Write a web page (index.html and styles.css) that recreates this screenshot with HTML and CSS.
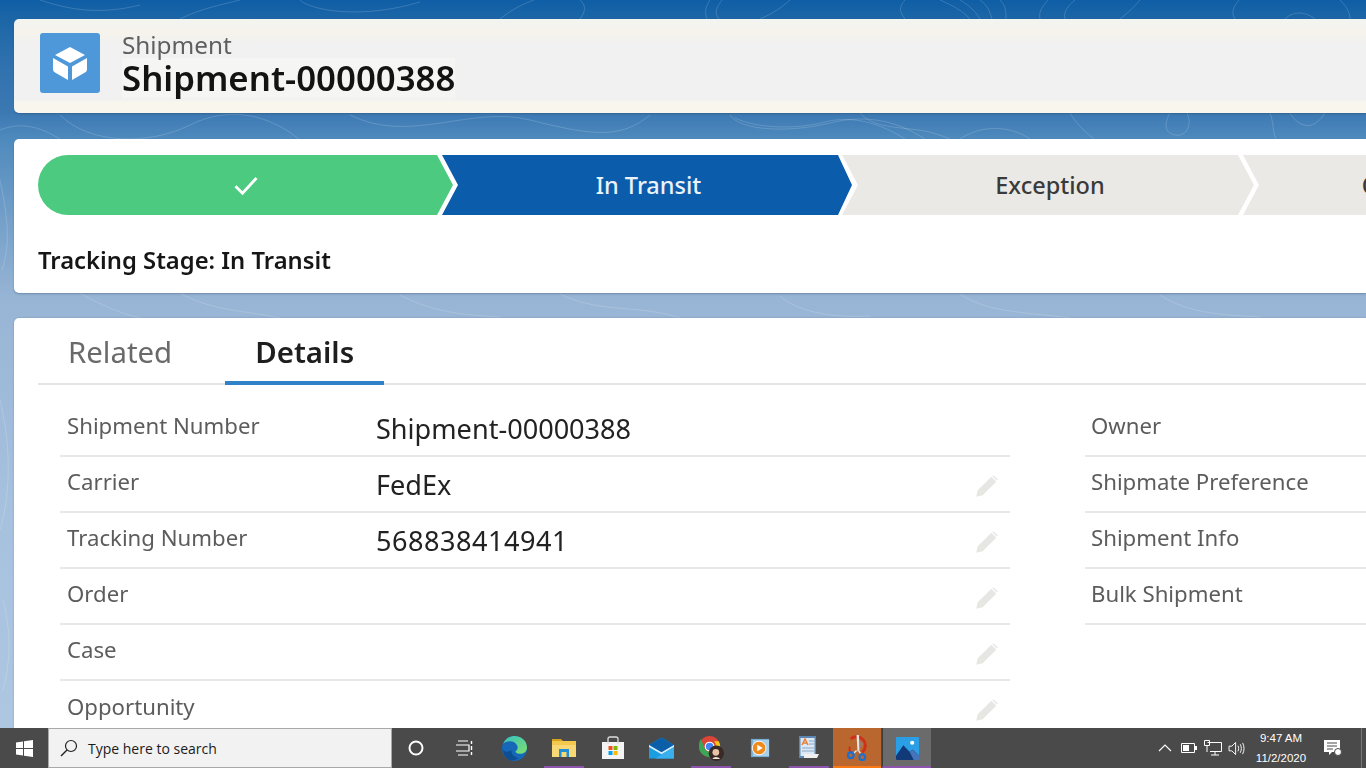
FILE: index.html
```html
<!DOCTYPE html>
<html lang="en">
<head>
<meta charset="utf-8">
<title>Shipment-00000388</title>
<link rel="stylesheet" href="styles.css">
</head>
<body>
<div class="screen">
  <main class="app">
    <svg class="contours" viewBox="0 0 1366 728" preserveAspectRatio="none" aria-hidden="true">
      <g fill="none" stroke="#ffffff" stroke-opacity=".16" stroke-width="1">
        <path d="M730 115c10 16 60 18 100 8s70 0 95 16"/>
        <path d="M735 118c20 10 60 12 90 4s60 4 80 17"/>
        <path d="M860 113c10 12 30 14 50 16s30 6 40 10"/>
        <path d="M1170 113c-6 10-6 20 5 22s18-10 12-22"/>
        <path d="M1270 113c4 10 2 18 6 26M1290 113c8 14 24 20 36-2M1070 113c6 10 14 18 24 26"/>
        <path d="M60 115c30 30 90 30 130 10s80-10 110 15"/>
        <path d="M350 115c60 30 120-10 180 5s90 20 120-5"/>
        <path d="M0 130c25-10 45 0 60 9M960 139c20-14 50-14 70 0"/>
        <path d="M710 0c-4 6-6 12-3 19M722 0c-6 8-8 13-3 19M760 19c14-6 22-12 30-19M905 19c-6-8-6-12 0-19"/>
        <path d="M940 0c14 6 24 12 30 19M960 0c10 6 16 12 20 19M980 0c8 6 10 12 12 19M1000 0c6 6 6 12 6 19M1040 19c-2-8 4-14 8-19M1065 19c-2-8 4-14 10-19"/>
        <path d="M1120 19c10-8 14-12 20-19M1235 19c-4-6-2-12 4-19M1285 19c8-8 20-8 30 0M1340 0c6 6 10 12 10 19"/>
        <path d="M40 0c30 10 60 15 100 5M300 0c10 10 60 20 120 2M180 19c20-10 40-14 60-19M500 19c10-8 20-14 34-19M580 19c6-8 6-14 0-19"/>
        <path d="M80 293c20 12 40 20 60 25M180 293c30 18 70 18 100 25"/>
        <path d="M400 295c30 16 60 20 100 22M560 294c40 20 80 10 120 24"/>
        <path d="M780 296c20 18 60 22 90 20M960 294c30 20 70 18 110 24"/>
        <path d="M1160 295c30 20 70 20 100 22"/>
        <path d="M0 180c6 30 12 60 2 90M0 400c10 40 12 90 0 130M3 600c8 30 8 60 0 90"/>
      </g>
    </svg>

    <header class="card head">
      <div class="tile">
        <svg viewBox="0 0 60 60" width="60" height="60" aria-hidden="true">
          <path d="M30 14l15 8-15 8-15-8z" fill="#fff"/>
          <path d="M13 25l15 8.500V47l-13-7.500q-2-1-2-3z" fill="#fff"/>
          <path d="M47 25l-15 8.500V47l13-7.500q2-1 2-3z" fill="#fff"/>
        </svg>
      </div>
      <div class="head-text">
        <div class="eyebrow">Shipment</div>
        <h1 class="title">Shipment-00000388</h1>
      </div>
    </header>

    <section class="card stages">
      <div class="path">
        <div class="step done">
          <svg viewBox="0 0 24 24" width="28" height="28" aria-hidden="true"><path d="M3 13l6 6L21 6" fill="none" stroke="#fff" stroke-width="2.400"/></svg>
        </div>
        <div class="step current">In Transit</div>
        <div class="step todo">Exception</div>
        <div class="step todo">Out for Delivery</div>
      </div>
      <div class="stage-label">Tracking Stage: In Transit</div>
    </section>

    <section class="card details">
      <nav class="tabs">
        <div class="tab">Related</div>
        <div class="tab active">Details</div>
      </nav>
      <div class="columns">
        <div class="col col-left">
          <div class="row"><span class="label">Shipment Number</span><span class="value">Shipment-00000388</span></div>
          <div class="row"><span class="label">Carrier</span><span class="value">FedEx</span>
            <svg class="pencil" viewBox="0 0 24 24" aria-hidden="true"><path d="M2 22l1.500-6L16 3.500l4.500 4.500L8 20.500z M18 2l4 4-1 1-4-4z"/></svg></div>
          <div class="row"><span class="label">Tracking Number</span><span class="value digits">568838414941</span>
            <svg class="pencil" viewBox="0 0 24 24" aria-hidden="true"><path d="M2 22l1.500-6L16 3.500l4.500 4.500L8 20.500z M18 2l4 4-1 1-4-4z"/></svg></div>
          <div class="row"><span class="label">Order</span><span class="value"></span>
            <svg class="pencil" viewBox="0 0 24 24" aria-hidden="true"><path d="M2 22l1.500-6L16 3.500l4.500 4.500L8 20.500z M18 2l4 4-1 1-4-4z"/></svg></div>
          <div class="row"><span class="label">Case</span><span class="value"></span>
            <svg class="pencil" viewBox="0 0 24 24" aria-hidden="true"><path d="M2 22l1.500-6L16 3.500l4.500 4.500L8 20.500z M18 2l4 4-1 1-4-4z"/></svg></div>
          <div class="row"><span class="label">Opportunity</span><span class="value"></span>
            <svg class="pencil" viewBox="0 0 24 24" aria-hidden="true"><path d="M2 22l1.500-6L16 3.500l4.500 4.500L8 20.500z M18 2l4 4-1 1-4-4z"/></svg></div>
        </div>
        <div class="col col-right">
          <div class="row"><span class="label">Owner</span></div>
          <div class="row"><span class="label">Shipmate Preference</span></div>
          <div class="row"><span class="label">Shipment Info</span></div>
          <div class="row"><span class="label">Bulk Shipment</span></div>
        </div>
      </div>
    </section>
  </main>

  <footer class="taskbar">
    <div class="start">
      <svg viewBox="0 0 17 17" width="17" height="17" aria-hidden="true"><path fill="#fff" d="M0 2.400l7-1V8H0zM8 1.300L17 0v8H8zM0 9h7v6.600l-7-1zM8 9h9v8l-9-1.300z"/></svg>
    </div>
    <div class="search">
      <svg viewBox="0 0 18 18" width="18" height="18" aria-hidden="true"><circle cx="11" cy="7" r="5.500" fill="none" stroke="#222" stroke-width="1.200"/><path d="M7 11l-6 6" stroke="#222" stroke-width="1.400"/></svg>
      <span class="search-text">Type here to search</span>
    </div>
    <div class="slot cortana">
      <svg viewBox="0 0 16 16" width="16" height="16" aria-hidden="true"><circle cx="8" cy="8" r="6.500" fill="none" stroke="#fff" stroke-width="2"/></svg>
    </div>
    <div class="slot taskview">
      <svg viewBox="0 0 18 16" width="18" height="16" aria-hidden="true"><path d="M3 1h10M3 15h10M1 5h13v6H1" fill="none" stroke="#fff" stroke-width="1.200"/><path d="M16.500 1v3M16.500 6v4M16.500 12v3" stroke="#fff" stroke-width="1.400"/></svg>
    </div>
    <div class="slot">
      <svg viewBox="0 0 24 24" width="25" height="25" aria-hidden="true">
        <defs><linearGradient id="edgeA" x1="0" y1="0" x2="1" y2="1"><stop offset="0" stop-color="#35c1c4"/><stop offset="1" stop-color="#7fe06a"/></linearGradient></defs>
        <circle cx="12" cy="12" r="12" fill="#1667b7"/>
        <path d="M1 8C3 2 8 0 12 0c7 0 12 5 12 11 0 4-3 6-6 6-3 0-5-1-5-2 0-1 2-1 2-4 0-3-3-6-7-6-3 0-6 1-7 3z" fill="url(#edgeA)"/>
        <path d="M9 14c0 4 3 7 7 7-3 2-6 3-9 2-4-2-6-6-6-10 2 3 5 2 8 1z" fill="#0c4e94"/>
      </svg>
    </div>
    <div class="slot pinned">
      <svg viewBox="0 0 24 20" width="24" height="20" aria-hidden="true"><path d="M0 1h9l2 2H0z" fill="#d9a21b"/><path d="M0 3h24v16H0z" fill="#f8d775"/><path d="M0 3h24v4H0z" fill="#f2c94c"/><path d="M7 11h10v8H7z" fill="#1f8fd6"/><path d="M9.500 14h5v5h-5z" fill="#f8d775"/></svg>
    </div>
    <div class="slot">
      <svg viewBox="0 0 24 24" width="24" height="26" aria-hidden="true"><path d="M1 6h22v17H1z" fill="#f4f4f4"/><path d="M7 8V3q0-2 2-2h6q2 0 2 2v5" fill="none" stroke="#ddd" stroke-width="1.300"/><path d="M7.500 10h4v4h-4z" fill="#f25022"/><path d="M12.500 10h4v4h-4z" fill="#7fba00"/><path d="M7.500 15h4v4h-4z" fill="#00a4ef"/><path d="M12.500 15h4v4h-4z" fill="#ffb900"/></svg>
    </div>
    <div class="slot">
      <svg viewBox="0 0 24 20" width="25" height="22" aria-hidden="true"><path d="M0 7L12 0l12 7v13H0z" fill="#1b9de2"/><path d="M0 7l12 8 12-8-12-7z" fill="#0a5fa8"/><path d="M0 7l12 7 12-7v2L12 16 0 9z" fill="#d8eefb"/><path d="M24 9v11H6z" fill="#39b0ee"/></svg>
    </div>
    <div class="slot pinned">
      <svg class="chrome" viewBox="0 0 26 26" width="25" height="25" aria-hidden="true"><circle cx="11" cy="11" r="11" fill="#db4437"/><path d="M20.500 5.500A11 11 0 0 1 11 22l4.500-8a5.500 5.500 0 0 0 0-8.500z" fill="#f5c518"/><path d="M0 11A11 11 0 0 0 11 22l4-7.500a5.500 5.500 0 0 1-9-1.500L2 3a11 11 0 0 0-2 8z" fill="#3aa757"/><circle cx="11" cy="11" r="4.500" fill="#4285f4" stroke="#fff" stroke-width="1.200"/><circle cx="18" cy="18" r="8" fill="#3a2a25"/><circle cx="17.500" cy="17" r="3.500" fill="#e9c2a8"/><path d="M14 24c1-3 6-3 8 0z" fill="#efe5dc"/></svg>
    </div>
    <div class="slot">
      <svg viewBox="0 0 22 22" width="20" height="20" aria-hidden="true"><path d="M1 1h20v20H1z" fill="#6fa8d2"/><path d="M3 2h18v18H3z" fill="#a8cfe8"/><circle cx="10" cy="11" r="7.500" fill="#f08a1d" stroke="#fff" stroke-width="1"/><path d="M8 7.500l6 3.500-6 3.500z" fill="#fff"/></svg>
    </div>
    <div class="slot pinned">
      <svg viewBox="0 0 20 24" width="20" height="24" aria-hidden="true"><path d="M0 0h17v22H0z" fill="#5b87b5"/><path d="M1.500 2h14v18h-14z" fill="#dce9f5"/><path d="M3 9l3-6 3 6M4.200 7h3.600" fill="none" stroke="#e8833a" stroke-width="1.600"/><path d="M10 5h5M10 8h5M3 12h12M3 15h12" stroke="#8aa7c4" stroke-width="1"/><path d="M5 18h15l-2 4H5z" fill="#f0f0f0"/></svg>
    </div>
    <div class="slot active-orange">
      <svg viewBox="0 0 24 28" width="23" height="27" aria-hidden="true"><path d="M5 4a8.500 8.500 0 0 1 12 14" fill="none" stroke="#d0301a" stroke-width="3"/><path d="M4 12c-1 3 0 5 2 6" fill="none" stroke="#d0301a" stroke-width="2"/><path d="M11 0h2.500l.5 15-2 2z" fill="#e6e6e6"/><path d="M14.500 6l4 3-4 5z" fill="#a0796a"/><path d="M11 16l-3 3M13 16l2 3" stroke="#dfe4ea" stroke-width="1.500"/><circle cx="5" cy="21" r="3" fill="none" stroke="#1a6fd0" stroke-width="2.200"/><circle cx="17" cy="23" r="3" fill="none" stroke="#1a6fd0" stroke-width="2.200"/></svg>
    </div>
    <div class="slot active-gray">
      <svg viewBox="0 0 22 22" width="23" height="23" aria-hidden="true"><path d="M0 1q0-1 1-1h20q1 0 1 1v20q0 1-1 1H1q-1 0-1-1z" fill="#2b9fe6"/><circle cx="15.500" cy="5.500" r="2" fill="#fff"/><path d="M0 18l7-10 6 6 3-2 6 6v3q0 1-1 1H1q-1 0-1-1z" fill="#123a78"/><path d="M13 14l3-2 6 6v4h-5z" fill="#4773b8"/></svg>
    </div>
    <div class="tray">
      <svg viewBox="0 0 14 8" width="14" height="8" aria-hidden="true"><path d="M1 7l6-6 6 6" fill="none" stroke="#fff" stroke-width="1.100"/></svg>
      <svg viewBox="0 0 16 10" width="16" height="10" aria-hidden="true"><path d="M.5.500h13v9H.5z" fill="none" stroke="#fff"/><path d="M2 2h6v6H2z" fill="#fff"/><path d="M14 3h2v4h-2z" fill="#fff"/></svg>
      <svg viewBox="0 0 18 16" width="18" height="16" aria-hidden="true"><path d="M3.500 2.500h14v9H6M11 11.500V15M7 15h8" fill="none" stroke="#fff"/><path d="M.5.500h5v5h-5zM3 5.500V12" fill="none" stroke="#fff"/></svg>
      <svg viewBox="0 0 18 16" width="17" height="15" aria-hidden="true"><path d="M.5 5.500h3l4-4v13l-4-4h-3z" fill="none" stroke="#fff"/><path d="M10 5c1 2 1 4 0 6M12.500 3.500c1.500 3 1.500 6 0 9M15 2c2 4 2 8 0 12" fill="none" stroke="#fff"/></svg>
      <div class="clock"><div>9:47 AM</div><div>11/2/2020</div></div>
      <svg class="notify" viewBox="0 0 18 16" width="18" height="16" aria-hidden="true"><path d="M0 0h16v12H8l-3 3v-3H0z" fill="#fff"/><path d="M3 3h10M3 6h10M3 9h6" stroke="#4a4a4a"/><circle cx="14" cy="12" r="3.500" fill="#fff" stroke="#4a4a4a"/></svg>
      <div class="show-desktop"></div>
    </div>
  </footer>
</div>
</body>
</html>
```
FILE: styles.css
```css
* { box-sizing: border-box; }
html, body { margin: 0; height: 100%; overflow: hidden; }
body { font-family: "Noto Sans", "Open Sans", sans-serif; color: #1c1c1c; }

.screen { width: 1366px; height: 768px; display: flex; flex-direction: column; overflow: hidden; }

.app {
  position: relative;
  flex: 1;
  min-height: 0;
  overflow: hidden;
  padding: 19px 0 0 14px;
  display: flex;
  flex-direction: column;
  background: linear-gradient(180deg, #0f5ea6 0, #1c66a6 19px, #2e70ae 60px, #3c79b3 113px, #4f8abd 139px, #98b5d5 300px, #a6c1de 500px, #adc7e2 728px);
}
.contours { position: absolute; inset: 0; width: 100%; height: 100%; }

.card {
  position: relative;
  flex: none;
  background: #fff;
  border-radius: 5px 0 0 5px;
  box-shadow: 0 1px 2px rgba(40, 60, 90, .35);
  filter: blur(.45px);
}

.head {
  height: 94px;
  margin-bottom: 26px;
  display: flex;
  align-items: flex-start;
  gap: 22px;
  background: linear-gradient(180deg, #f3f4f0 0, #f6f3ec 14px, #f1f1f1 24px, #f1f1f1 80px, #f9f6ee 83px, #f9f6ee 94px);
  padding: 14px 0 0 26px;
}
.tile {
  width: 60px;
  height: 60px;
  border-radius: 3px;
  background: #4e97d9;
}
.tile svg { display: block; }
.eyebrow { font-size: 24.3px; line-height: 26px; color: #5f5f5f; margin-top: -1px; }
.title { margin: 0; font-size: 34.8px; line-height: 40px; font-weight: 600; color: #131313; background: #f5f5f3; }

.stages { height: 154px; margin-bottom: 25px; padding: 16px 0 0 24px; }
.path { display: flex; height: 60px; width: 1400px; }
.step {
  flex: 0 0 412px;
  margin-right: -11px;
  height: 60px;
  display: flex;
  align-items: center;
  justify-content: center;
  font-size: 23.5px;
  font-weight: 500;
  clip-path: polygon(0 0, 396px 0, 100% 50%, 396px 100%, 0 100%, 16px 50%);
}
.done { flex-basis: 415px; background: #4ccb80; border-radius: 30px 0 0 30px; clip-path: polygon(0 0, 399px 0, 100% 50%, 399px 100%, 0 100%); }
.current { flex-basis: 410px; margin-right: -10px; background: #0b5cab; color: #eaf2fa; padding-left: 3px; }
.todo { background: #ebe9e5; color: #3a3a3a; padding-left: 4px; }
.stage-label { margin-top: 29px; font-size: 23.8px; line-height: 32px; font-weight: 600; color: #161616; }

.details { flex: 1 1 0; min-height: 0; border-radius: 5px 0 0 0; padding: 0 0 0 24px; box-shadow: 0 0 2px rgba(40, 60, 90, .3); }
.tabs { display: flex; height: 67px; border-bottom: 2px solid #e4e4e4; }
.tab { height: 67px; padding: 14px 30px 0; font-size: 29.4px; line-height: 40px; color: #6a6a6a; }
.tab.active { flex: none; width: 159px; font-weight: 600; color: #1e1e1e; border-bottom: 4px solid #2f82c8; text-align: center; padding: 14px 0 0; margin-left: 23px; }

.columns { display: flex; padding: 16px 0 0 22px; }
.col-left { flex: 0 0 950px; }
.col-right { flex: 1; margin-left: 75px; }
.row {
  position: relative;
  display: flex;
  align-items: center;
  height: 56px;
  padding-left: 7px;
  border-bottom: 2px solid #e8e8e8;
}
.row:last-child { border-bottom: 0; }
.col-right .row:last-child { border-bottom: 2px solid #e8e8e8; }
.label { flex: 0 0 309px; font-size: 22.2px; color: #5c5c5c; padding-bottom: 5px; }
.col-right .label { flex: none; }
.col-right .row { padding-left: 6px; }
.value { font-size: 27.1px; color: #222; }
.digits { letter-spacing: .5px; }
.pencil { position: absolute; right: 10px; top: 16px; width: 26px; height: 26px; fill: #e6e6e3; }

.taskbar { height: 40px; display: flex; align-items: stretch; background: #4a4a4a; flex: none; }
.start { flex: 0 0 48px; display: flex; align-items: center; justify-content: center; }
.search {
  flex: 0 0 344px;
  display: flex;
  align-items: center;
  gap: 10px;
  padding-left: 11px;
  background: #f2f2f2;
  border: 1px solid #a8a8a8;
}
.search-text { font-family: "Open Sans", sans-serif; font-size: 14px; color: #1b1b1b; }
.slot { flex: 0 0 49px; display: flex; align-items: center; justify-content: center; border-bottom: 2px solid transparent; padding-top: 2px; }
.cortana { padding-right: 2px; }
.taskview { padding-right: 4px; }
.pinned { background: linear-gradient(#8e53ad, #8e53ad) center bottom / 40px 2px no-repeat; border-bottom: 0; padding-bottom: 2px; }
.chrome { margin-left: 2px; }
.active-orange { background: #b9672f; border-bottom-color: #f97a14; margin-right: 1px; flex-basis: 48px; }
.active-gray { background: #6b6b6b; border-bottom-color: #8e53ad; border-left: 1px solid #3c3c3c; }
.tray { flex: 1; display: flex; align-items: center; padding-left: 222px; color: #fff; }
.tray > svg { flex: 0 0 24px; }
.clock { flex: 0 0 60px; padding-left: 4px; text-align: center; font-family: "Liberation Sans", sans-serif; font-size: 11.5px; line-height: 20px; white-space: nowrap; }
.tray > .notify { flex: 0 0 18px; margin-left: 15px; }
.show-desktop { flex: 0 0 1px; height: 40px; background: #777; margin-left: 19px; }
```
